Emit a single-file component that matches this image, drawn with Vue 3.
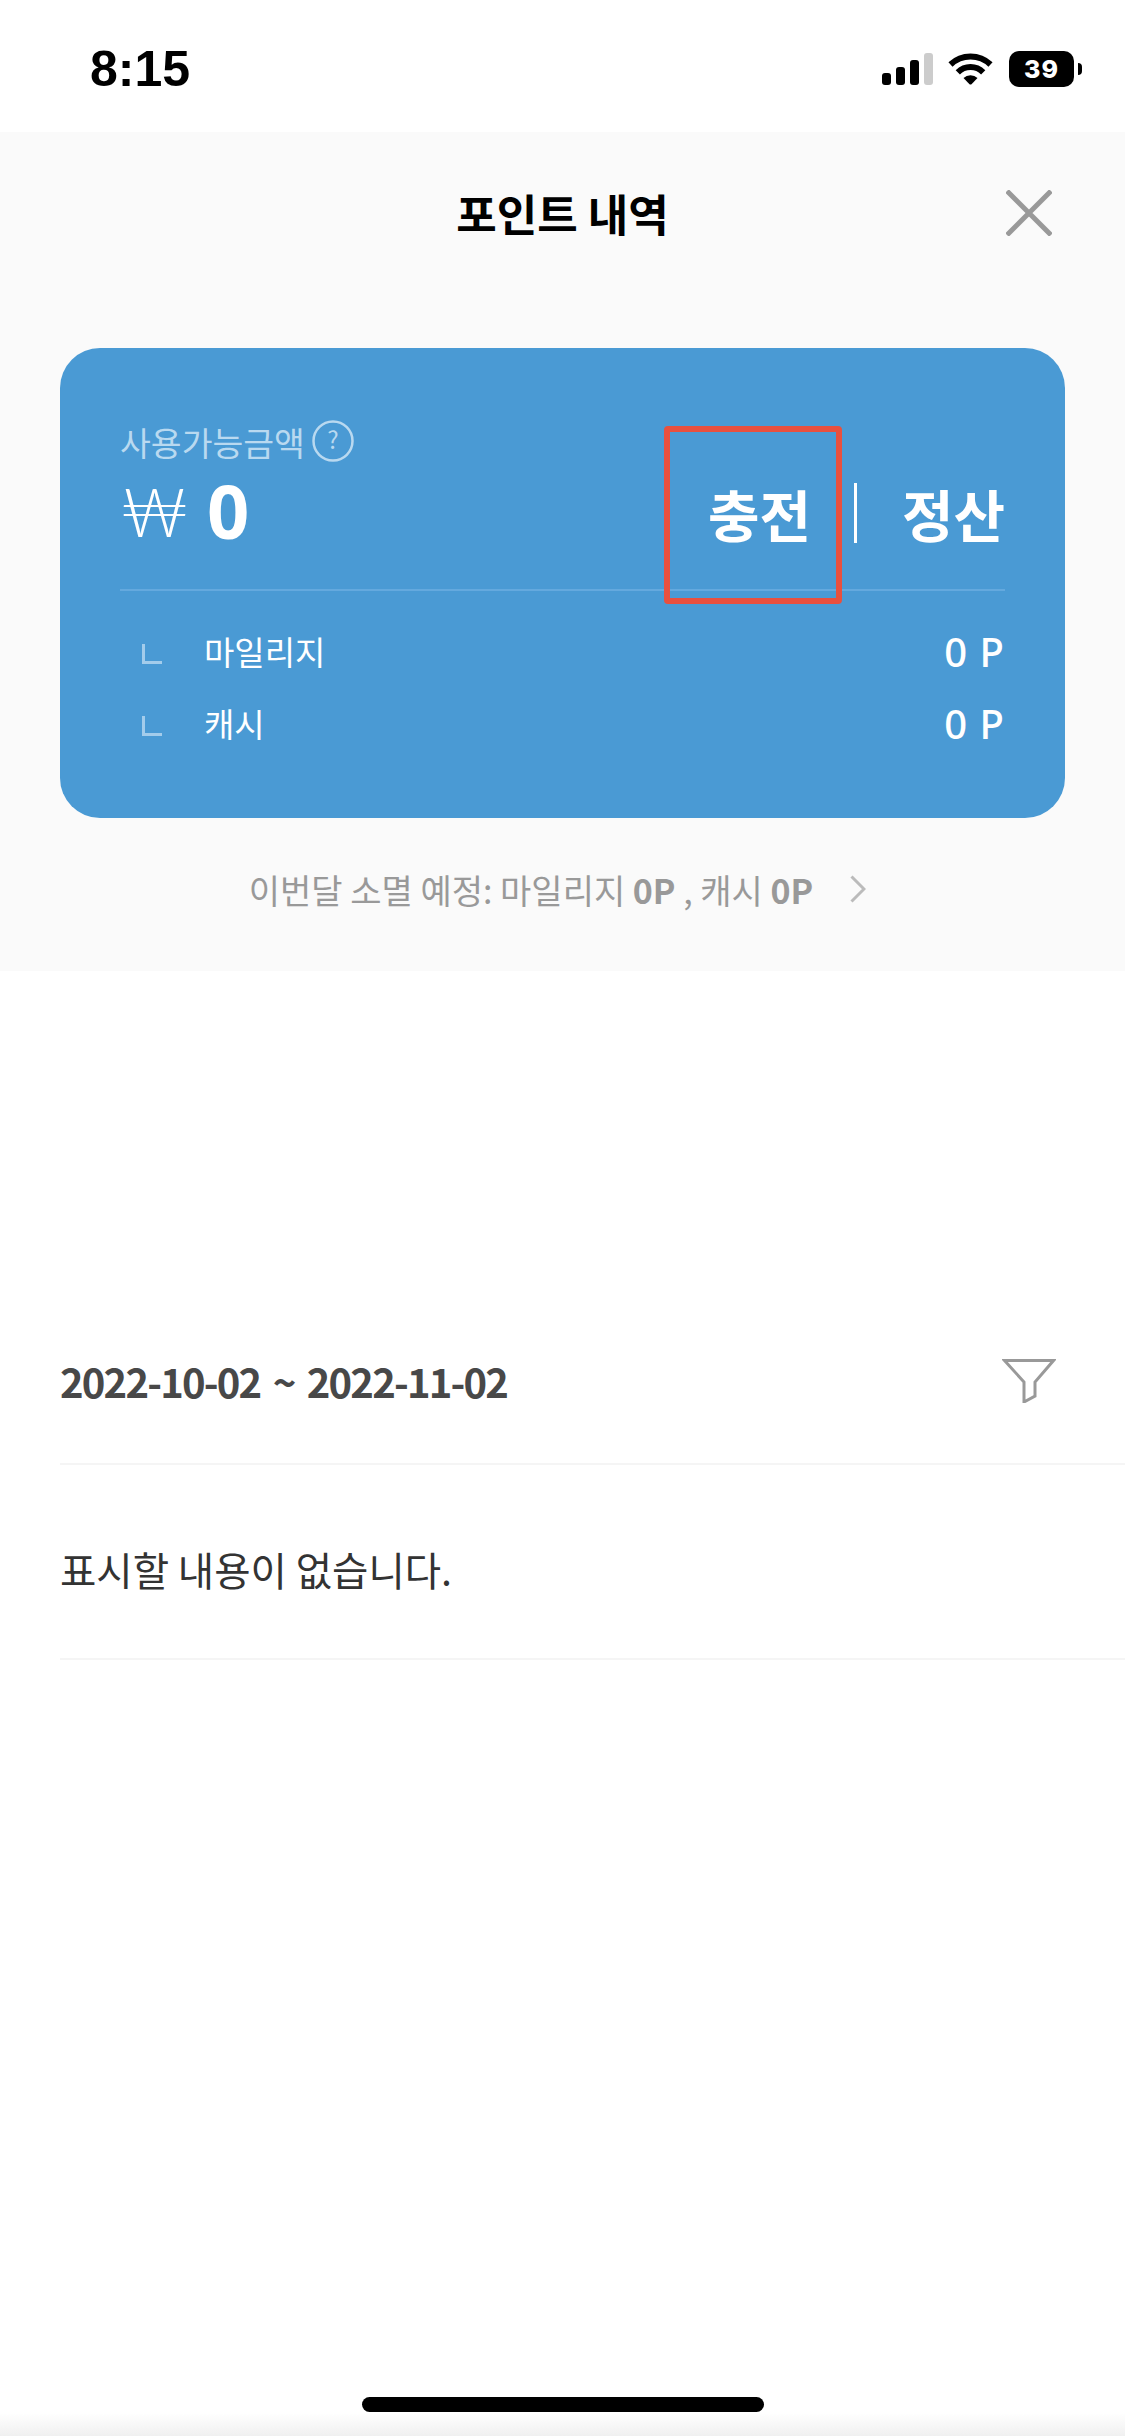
<template>
  <div class="page">
    <!-- status bar -->
    <div class="status">
      <span class="time">8:15</span>
      <div class="status-icons">
        <div class="signal">
          <i v-for="(h, i) in signalBars" :key="i" :class="{ off: i === 3 }" :style="{ height: h + 'px' }"></i>
        </div>
        <svg class="wifi" width="45" height="32" viewBox="0 0 45 32">
          <path d="M2.5 11.5A29 29 0 0 1 42.5 11.5" fill="none" stroke="#000" stroke-width="6" />
          <path d="M9.8 19.3A18 18 0 0 1 35.2 19.3" fill="none" stroke="#000" stroke-width="6" />
          <path d="M15.5 25A10 10 0 0 1 29.5 25L23.5 31.2Q22.5 32 21.5 31.2Z" fill="#000" />
        </svg>
        <div class="battery"><span>39</span></div>
        <i class="battery-nub"></i>
      </div>
    </div>

    <!-- 상단 요약 -->
    <section class="summary">
      <header class="topbar">
        <span></span>
        <h1>포인트 내역</h1>
        <svg class="close" width="46" height="46" viewBox="0 0 46 46">
          <path d="M1 1L45 45M45 1L1 45" stroke="#999" stroke-width="5" fill="none" />
        </svg>
      </header>

      <div class="card">
        <div class="card-top">
          <div class="balance">
            <div class="label">
              <span>사용가능금액</span>
              <svg width="42" height="42" viewBox="0 0 42 42">
                <circle cx="21" cy="21" r="19.5" fill="none" stroke="#b9d9f0" stroke-width="2.5" />
                <text x="21" y="29" text-anchor="middle" font-size="24" fill="#b9d9f0">?</text>
              </svg>
            </div>
            <div class="amount"><span class="won">₩</span><b>0</b></div>
          </div>
          <div class="actions">
            <button class="action charge">충전</button>
            <i class="action-sep"></i>
            <button class="action">정산</button>
          </div>
          <div class="highlight"></div>
        </div>

        <div class="rows">
          <div v-for="row in rows" :key="row.name" class="row">
            <svg width="20" height="20" viewBox="0 0 20 20">
              <path d="M1.5 0V18.5H20" fill="none" stroke="#a3cceb" stroke-width="3" />
            </svg>
            <span class="row-name">{{ row.name }}</span>
            <span class="row-value">{{ row.value }}</span>
          </div>
        </div>
      </div>

      <div class="expire">
        <span>이번달 소멸 예정: 마일리지 <b>0P</b> , 캐시 <b>0P</b></span>
        <svg width="16" height="28" viewBox="0 0 16 28">
          <path d="M1.5 1.5L14 14L1.5 26.5" fill="none" stroke="#bbb" stroke-width="3" />
        </svg>
      </div>
    </section>

    <!-- 내역 -->
    <section class="history">
      <div class="period">
        <span>2022-10-02 ~ 2022-11-02</span>
        <svg width="54" height="44" viewBox="0 0 54 44">
          <path d="M2.5 1.5H51.5L33 23V37L22 43V23Z" fill="none" stroke="#999" stroke-width="3" />
        </svg>
      </div>
      <div class="empty"><span>표시할 내용이 없습니다.</span></div>
    </section>

    <div class="home-fade"></div>
    <div class="home-bar"></div>
  </div>
</template>

<script setup>
const signalBars = [12, 18, 25, 32]

const rows = [
  { name: '마일리지', value: '0 P' },
  { name: '캐시', value: '0 P' }
]
</script>

<style>
html, body {
  margin: 0;
  background: #fff;
}
</style>

<style scoped>
.page {
  position: relative;
  width: 1125px;
  height: 2436px;
  overflow: hidden;
  background: #fff;
  font-family: "Noto Sans CJK KR", "Noto Sans", sans-serif;
  color: #333;
}

.status {
  height: 132px;
  box-sizing: border-box;
  padding: 41px 43px 0 90px;
  display: flex;
  justify-content: space-between;
  align-items: flex-start;
}

.time {
  font-family: "Liberation Sans", sans-serif;
  font-weight: 700;
  font-size: 50px;
  line-height: 56px;
  color: #000;
}

.status-icons {
  display: flex;
  align-items: center;
  margin-top: 10px;
}

.signal {
  display: flex;
  align-items: flex-end;
  gap: 5px;
  height: 32px;
}

.signal i {
  width: 9px;
  border-radius: 3px;
  background: #000;
}

.signal i.off {
  background: #ccc;
}

.wifi {
  margin-left: 15px;
}

.battery {
  margin-left: 16px;
  width: 65px;
  height: 36px;
  border-radius: 10px;
  background: #000;
  display: flex;
  align-items: center;
  justify-content: center;
}

.battery span {
  font-family: Inter, sans-serif;
  font-size: 25px;
  font-weight: 800;
  letter-spacing: 1px;
  color: #fff;
}

.battery-nub {
  margin-left: 4px;
  width: 4px;
  height: 12px;
  border-radius: 0 6px 6px 0;
  background: #000;
}

.summary {
  height: 839px;
  background: #fafafa;
}

.topbar {
  height: 216px;
  box-sizing: border-box;
  padding: 0 73px 54px;
  display: grid;
  grid-template-columns: 1fr auto 1fr;
  align-items: center;
}

.topbar h1 {
  margin: 0;
  font-size: 44px;
  font-weight: 700;
  color: #000;
}

.close {
  justify-self: end;
}

.card {
  margin: 0 60px;
  height: 470px;
  box-sizing: border-box;
  padding: 0 60px;
  border-radius: 40px;
  background: #4a9ad4;
  color: #fff;
}

.card-top {
  position: relative;
  height: 243px;
  box-sizing: border-box;
  border-bottom: 2px solid #64a9de;
  display: flex;
  justify-content: space-between;
}

.balance {
  padding-top: 72px;
}

.label {
  display: flex;
  align-items: center;
  gap: 7px;
  height: 42px;
  font-size: 33.5px;
  color: #b9d9f0;
}

.amount {
  display: flex;
  align-items: center;
  margin-top: 17px;
  height: 64px;
}

.won {
  width: 87px;
  font-family: Lato, sans-serif;
  font-size: 67px;
  font-weight: 300;
  line-height: 64px;
}

.amount b {
  font-family: "Noto Sans", sans-serif;
  font-size: 74px;
  font-weight: 700;
  line-height: 64px;
}

.actions {
  display: flex;
  align-items: center;
  height: 60px;
  margin-top: 135px;
}

.action {
  padding: 0;
  border: 0;
  background: none;
  font: inherit;
  font-size: 56px;
  font-weight: 700;
  line-height: 60px;
  color: #fff;
}

.action-sep {
  width: 3px;
  height: 60px;
  margin: 0 45px 0 43px;
  background: #fff;
}

.highlight {
  position: absolute;
  left: 544px;
  top: 78px;
  width: 178px;
  height: 178px;
  box-sizing: border-box;
  border: 6px solid #e8503f;
  border-radius: 4px;
}

.rows {
  padding-top: 24px;
}

.row {
  display: flex;
  align-items: center;
  height: 72px;
}

.row svg {
  margin: 6px 0 0 22px;
}

.row-name {
  margin-left: 42px;
  font-size: 33px;
}

.row-value {
  margin-left: auto;
  font-family: "Noto Sans", sans-serif;
  font-size: 40px;
  font-weight: 500;
  letter-spacing: 1px;
}

.expire {
  height: 142px;
  box-sizing: border-box;
  padding-right: 10px;
  display: flex;
  align-items: center;
  justify-content: center;
  gap: 37px;
  font-size: 34px;
  color: #999;
}

.expire b {
  font-weight: 700;
}

.period {
  margin: 327px 0 0 60px;
  height: 167px;
  box-sizing: border-box;
  padding: 0 69px 0 0;
  border-bottom: 2px solid #f5f5f5;
  display: flex;
  align-items: center;
  justify-content: space-between;
  font-size: 40px;
  font-weight: 600;
  letter-spacing: -1.8px;
  word-spacing: 5px;
  color: #484848;
}

.empty {
  margin-left: 60px;
  height: 195px;
  box-sizing: border-box;
  padding-top: 14px;
  border-bottom: 2px solid #f5f5f5;
  display: flex;
  align-items: center;
  font-size: 39.5px;
  color: #333;
}

.home-fade {
  position: absolute;
  left: 0;
  right: 0;
  bottom: 0;
  height: 23px;
  background: linear-gradient(#fff, #f0f0f0);
}

.home-bar {
  position: absolute;
  left: 362px;
  top: 2397px;
  width: 402px;
  height: 15px;
  border-radius: 8px;
  background: #000;
}
</style>
